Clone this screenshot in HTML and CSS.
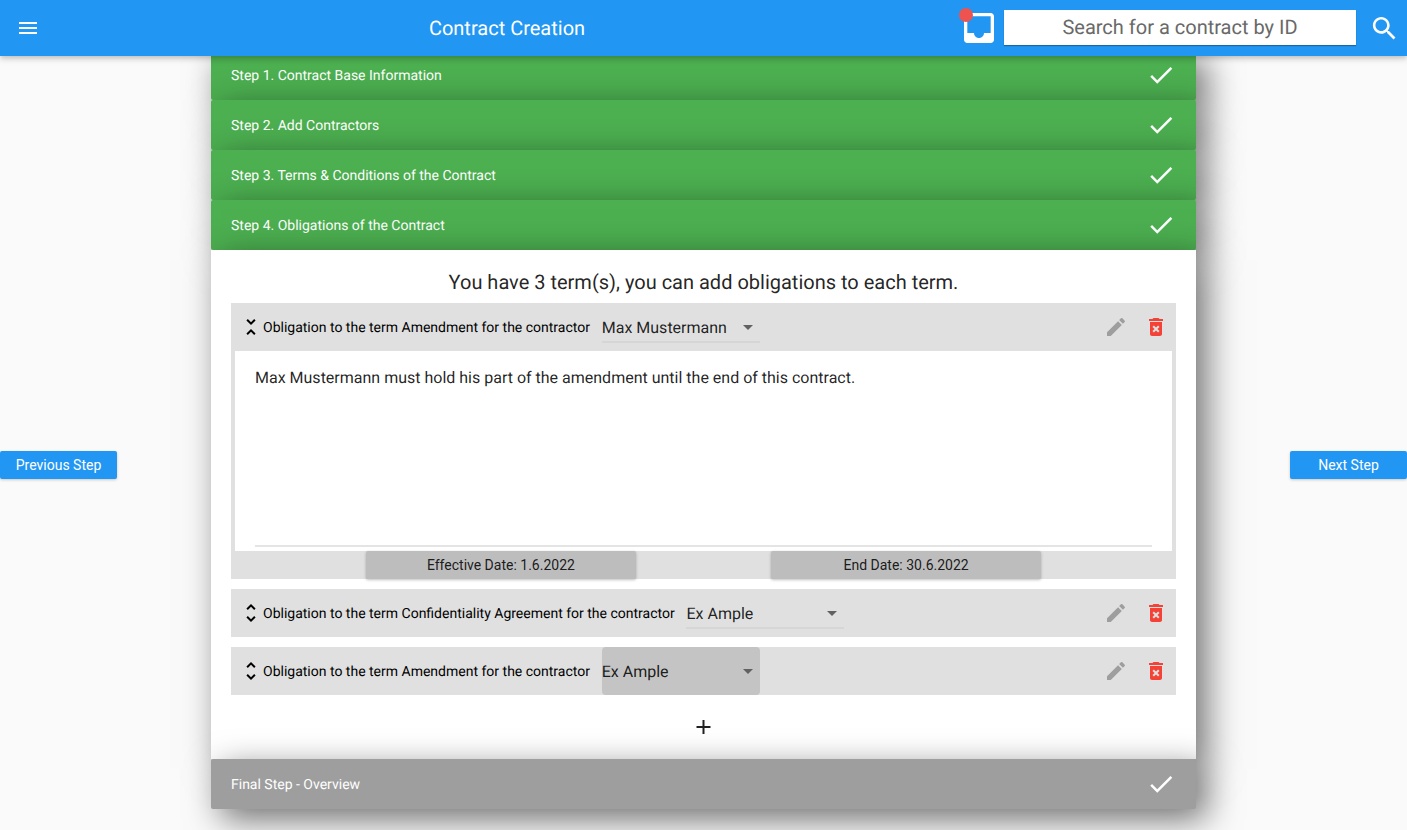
FILE: index.html
```html
<!DOCTYPE html>
<html lang="en">
<head>
<meta charset="utf-8">
<title>Contract Creation</title>
<link rel="stylesheet" href="styles.css">
</head>
<body>
<svg class="defs" width="0" height="0">
  <symbol id="check" viewBox="0 0 24 24"><path d="M9 16.17 4.83 12l-1.42 1.41L9 19 21 7l-1.41-1.41z"/></symbol>
  <symbol id="fold" viewBox="0 0 24 24"><path d="M7.41 18.59 8.83 20 12 16.83 15.17 20l1.41-1.41L12 14l-4.59 4.59zm9.18-13.18L15.17 4 12 7.17 8.83 4 7.41 5.41 12 10l4.59-4.59z"/></symbol>
  <symbol id="unfold" viewBox="0 0 24 24"><path d="M12 5.83 15.17 9l1.41-1.41L12 3 7.41 7.59 8.83 9 12 5.83zm0 12.34L8.83 15l-1.41 1.41L12 21l4.59-4.59L15.17 15 12 18.17z"/></symbol>
  <symbol id="edit" viewBox="0 0 24 24"><path d="M3 17.25V21h3.75L17.81 9.94l-3.75-3.75L3 17.25zM20.71 7.04c.39-.39.39-1.02 0-1.41l-2.34-2.34c-.39-.39-1.02-.39-1.41 0l-1.83 1.83 3.75 3.75 1.83-1.83z"/></symbol>
  <symbol id="trash" viewBox="0 0 24 24"><path d="M6 19c0 1.1.9 2 2 2h8c1.1 0 2-.9 2-2V7H6v12zm2.46-7.12 1.41-1.41L12 12.59l2.12-2.12 1.41 1.41L13.41 14l2.12 2.12-1.41 1.41L12 15.41l-2.12 2.12-1.41-1.41L10.59 14l-2.13-2.12zM15.5 4l-1-1h-5l-1 1H5v2h14V4z"/></symbol>
  <symbol id="drop" viewBox="0 0 24 24"><path d="m7 10 5 5 5-5z"/></symbol>
</svg>

<header class="appbar">
  <svg class="icon menu" viewBox="0 0 24 24"><path d="M3 18h18v-2H3v2zm0-5h18v-2H3v2zm0-7v2h18V6H3z"/></svg>
  <h1 class="title">Contract Creation</h1>
  <div class="inbox">
    <svg class="inbox-icon" viewBox="0 0 24 24"><path d="M19 3H4.99c-1.11 0-1.98.89-1.98 2L3 19c0 1.1.88 2 1.99 2H19c1.1 0 2-.9 2-2V5c0-1.11-.9-2-2-2zm0 12h-4c0 1.66-1.35 3-3 3s-3-1.34-3-3H4.99V5H19v10z"/></svg>
    <span class="badge"></span>
  </div>
  <div class="search">Search for a contract by ID</div>
  <svg class="search-icon" viewBox="0 0 24 24"><path d="M15.5 14h-.79l-.28-.27C15.41 12.59 16 11.11 16 9.5 16 5.91 13.09 3 9.5 3S3 5.91 3 9.5 5.91 16 9.5 16c1.61 0 3.09-.59 4.23-1.57l.27.28v.79l5 4.99L20.49 19l-4.99-5zm-6 0C7.01 14 5 11.99 5 9.5S7.01 5 9.5 5 14 7.01 14 9.5 11.99 14 9.5 14z"/></svg>
</header>

<main class="page">
  <button class="nav prev">Previous Step</button>
  <section class="stepper">
    <div class="step"><span>Step 1. Contract Base Information</span><svg class="check"><use href="#check"/></svg></div>
    <div class="step"><span>Step 2. Add Contractors</span><svg class="check"><use href="#check"/></svg></div>
    <div class="step"><span>Step 3. Terms &amp; Conditions of the Contract</span><svg class="check"><use href="#check"/></svg></div>
    <div class="step"><span>Step 4. Obligations of the Contract</span><svg class="check"><use href="#check"/></svg></div>
    <div class="panel">
      <h2 class="heading">You have 3 term(s), you can add obligations to each term.</h2>

      <article class="card">
        <div class="row">
          <svg class="icon toggle"><use href="#fold"/></svg>
          <span class="label">Obligation to the term Amendment for the contractor</span>
          <div class="select"><span>Max Mustermann</span><svg class="icon arrow"><use href="#drop"/></svg></div>
          <svg class="icon edit"><use href="#edit"/></svg>
          <svg class="icon trash"><use href="#trash"/></svg>
        </div>
        <div class="editor"><p class="text">Max Mustermann must hold his part of the amendment until the end of this contract.</p></div>
        <div class="dates">
          <button class="date">Effective Date: 1.6.2022</button>
          <button class="date">End Date: 30.6.2022</button>
        </div>
      </article>

      <article class="card">
        <div class="row">
          <svg class="icon toggle"><use href="#unfold"/></svg>
          <span class="label">Obligation to the term Confidentiality Agreement for the contractor</span>
          <div class="select"><span>Ex Ample</span><svg class="icon arrow"><use href="#drop"/></svg></div>
          <svg class="icon edit"><use href="#edit"/></svg>
          <svg class="icon trash"><use href="#trash"/></svg>
        </div>
      </article>

      <article class="card">
        <div class="row">
          <svg class="icon toggle"><use href="#unfold"/></svg>
          <span class="label">Obligation to the term Amendment for the contractor</span>
          <div class="select focused"><span>Ex Ample</span><svg class="icon arrow"><use href="#drop"/></svg></div>
          <svg class="icon edit"><use href="#edit"/></svg>
          <svg class="icon trash"><use href="#trash"/></svg>
        </div>
      </article>

      <svg class="add" viewBox="0 0 24 24"><path d="M19 13h-6v6h-2v-6H5v-2h6V5h2v6h6v2z"/></svg>
    </div>
    <div class="step final"><span>Final Step - Overview</span><svg class="check"><use href="#check"/></svg></div>
  </section>
  <button class="nav next">Next Step</button>
</main>
</body>
</html>
```

FILE: styles.css
```css
* { box-sizing: border-box; }

body {
  margin: 0;
  height: 830px;
  overflow: hidden;
  display: flex;
  flex-direction: column;
  background: #fafafa;
  font-family: Roboto, sans-serif;
  line-height: 20px;
  color: rgba(0, 0, 0, 0.87);
  text-rendering: geometricPrecision;
}

svg { display: block; flex: none; fill: currentColor; }
.defs { position: absolute; }
.icon { width: 24px; height: 24px; }

.appbar {
  position: relative;
  z-index: 2;
  flex: none;
  display: flex;
  align-items: center;
  height: 56px;
  padding: 0 7px 0 16px;
  background: #2196f3;
  color: #fff;
  box-shadow: 0 2px 4px -1px rgba(0, 0, 0, 0.12), 0 4px 5px rgba(0, 0, 0, 0.08), 0 1px 10px rgba(0, 0, 0, 0.1);
}
.title {
  flex: 1;
  margin: 0 0 0 15px;
  text-align: center;
  font-size: 20px;
  font-weight: 400;
  line-height: 24px;
}
.inbox { position: relative; margin-right: 5px; }
.inbox-icon { width: 40px; height: 40px; }
.badge {
  position: absolute;
  left: 0;
  top: 0;
  width: 14px;
  height: 14px;
  border-radius: 50%;
  background: #ef5350;
}
.search {
  width: 352px;
  height: 35px;
  margin: 0 13px 1px 0;
  background: #fff;
  box-shadow: 0 1px 1px rgba(0, 0, 0, 0.3);
  color: #696969;
  text-align: center;
  font-size: 20px;
  line-height: 35px;
}
.search-icon { width: 31px; height: 31px; }

.page {
  flex: 1;
  min-height: 0;
  display: flex;
  align-items: flex-start;
  justify-content: space-between;
}
.nav {
  width: 117px;
  height: 28px;
  margin-top: 395px;
  padding: 0;
  border: 0;
  border-radius: 2px;
  background: #2196f3;
  box-shadow: 0 1px 3px rgba(0, 0, 0, 0.2);
  color: #fff;
  font: 400 14px/28px Roboto, sans-serif;
}

.stepper { width: 985px; margin-top: -6px; }
.step, .panel { position: relative; box-shadow: 10px 10px 34px rgba(0, 0, 0, 0.56); }
.step {
  display: flex;
  align-items: center;
  justify-content: space-between;
  height: 50px;
  padding: 0 20px;
  border-radius: 2px;
  background: #4caf50;
  color: #fff;
  font-size: 14px;
}
.step span, .select span { padding-top: 2px; }
.final { background: #9e9e9e; }
.check { width: 30px; height: 30px; }

.panel {
  display: flex;
  flex-direction: column;
  gap: 10px;
  height: 509px;
  padding: 20px;
  background: #fff;
}
.heading {
  margin: 0 0 -1px;
  text-align: center;
  font-size: 20px;
  font-weight: 400;
  line-height: 24px;
}
.card { background: #e0e0e0; }
.row {
  display: flex;
  align-items: center;
  height: 48px;
  padding: 0 8px;
}
.toggle { color: #000; }
.label { margin: 0 11.8px 0 0; padding-top: 2px; font-size: 14px; color: #000; }
.select {
  display: flex;
  align-items: center;
  justify-content: space-between;
  width: 158px;
  height: 48px;
  font-size: 16px;
  background: linear-gradient(#d6d6d6, #d6d6d6) 0 38px / 100% 2px no-repeat;
}
.focused { border-radius: 4px; background: #c4c4c4; }
.arrow { color: #616161; }
.edit { margin-left: auto; color: #9e9e9e; }
.trash { margin-left: 16px; color: #f44336; }

.editor {
  height: 200px;
  margin: 0 4px;
  padding: 17px 20px 4px;
  background: #fff;
}
.text {
  height: 179px;
  margin: 0;
  border-bottom: 2px solid #e4e4e4;
  font-size: 16px;
  line-height: 19px;
}
.dates { display: flex; justify-content: space-evenly; height: 28px; }
.date {
  width: 270.6px;
  height: 28px;
  padding: 0;
  border: 0;
  border-radius: 2px;
  background: #bdbdbd;
  box-shadow: 0 1px 3px rgba(0, 0, 0, 0.25);
  color: rgba(0, 0, 0, 0.87);
  font: 400 14px/28px Roboto, sans-serif;
}
.add { width: 25px; height: 24px; margin: 10px auto 0; }
```
